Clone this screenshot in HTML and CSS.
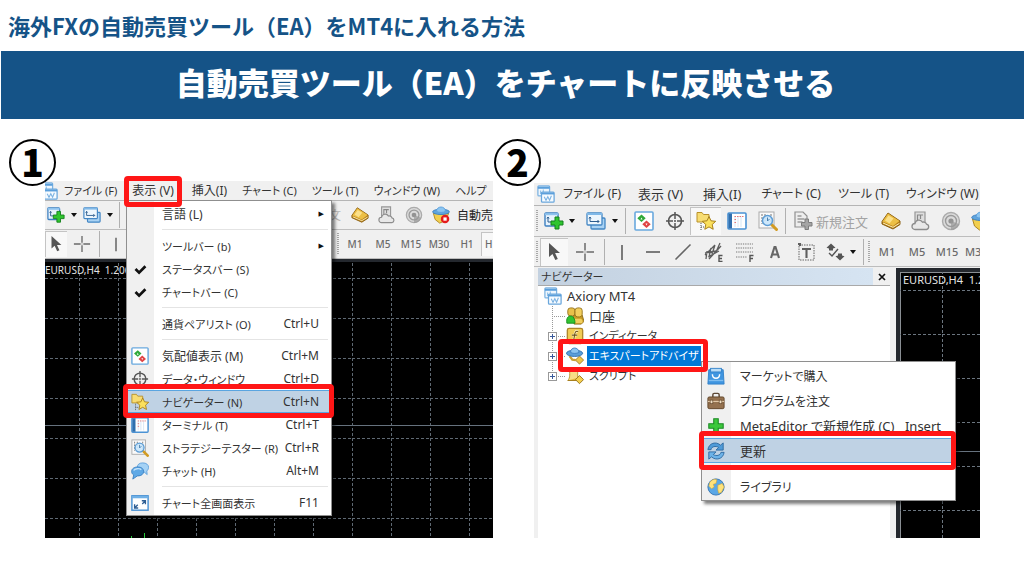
FILE: index.html
```html
<!DOCTYPE html>
<html lang="ja">
<head>
<meta charset="utf-8">
<meta name="viewport" content="width=device-width, initial-scale=1">
<title>自動売買ツール（EA）をチャートに反映させる</title>
<link rel="stylesheet" href="styles.css">
</head>
<body>
<svg class="sprite" aria-hidden="true">
  <defs>
    <symbol id="i-app" viewBox="0 0 20 20">
      <rect x="1" y="1" width="13" height="11" rx="1" fill="#eef6fd" stroke="#7db3e2" stroke-width="1.4"/>
      <path d="M1 3h13" stroke="#5b9fdb" stroke-width="2.4"/>
      <path d="M4 6v4M7 5v3" stroke="#8cc0ea" stroke-width="1.2"/>
      <rect x="5" y="8" width="14" height="11" rx="1" fill="#f6fbff" stroke="#6aa7dc" stroke-width="1.4"/>
      <path d="M5 9.5h14" stroke="#5b9fdb" stroke-width="2"/>
      <path d="M8 13l2 4 2-4 2 4 2-5" fill="none" stroke="#7db3e2" stroke-width="1.2"/>
    </symbol>
    <symbol id="i-newchart" viewBox="0 0 20 20">
      <rect x="1" y="2" width="13" height="13" rx="1" fill="#e6f2fc" stroke="#3c7fc0" stroke-width="1.4"/>
      <path d="M1 3.2h13" stroke="#8ec3ee" stroke-width="2"/>
      <path d="M4 6v5h4M4 6l-1 1.500M4 6l1 1.500" fill="none" stroke="#2c5c8e"/>
      <path d="M11 6h4v4h4v4h-4v4h-4v-4H7v-4h4z" fill="#2fc52f" stroke="#14801c"/>
    </symbol>
    <symbol id="i-profiles" viewBox="0 0 20 20">
      <rect x="5" y="7" width="14" height="11" rx="1" fill="#a9d2f3" stroke="#4386c4" stroke-width="1.300"/>
      <rect x="1" y="2" width="15" height="12" rx="1" fill="#edf6fd" stroke="#4386c4" stroke-width="1.300"/>
      <path d="M1 3h15" stroke="#80b9e8" stroke-width="2"/>
      <path d="M4 6v4.500h9M4 6l-1 1.500M4 6l1 1.500M11.500 9L13 10.500 11.500 12" fill="none" stroke="#2c5c8e"/>
    </symbol>
    <symbol id="i-market" viewBox="0 0 20 20">
      <rect x="1" y="1" width="18" height="18" rx="1" fill="#fff" stroke="#6aa9de" stroke-width="1.600"/>
      <path d="M7.500 3.500l4.200 3.700-4.200 3.700-4.200-3.700z" fill="#2fa93a"/>
      <path d="M12.500 9.500l4.200 3.700-4.200 3.700-4.200-3.700z" fill="#e04444"/>
      <path d="M6.500 8.500l1-2 1 2zM11.500 12.500l1 2 1-2z" fill="#fff"/>
    </symbol>
    <symbol id="i-target" viewBox="0 0 20 20">
      <circle cx="10" cy="10" r="6.500" fill="none" stroke="#555" stroke-width="1.600"/>
      <path d="M10 1v7M10 12v7M1 10h7M12 10h7" stroke="#555" stroke-width="1.500"/>
      <circle cx="10" cy="10" r="1" fill="#555"/>
    </symbol>
    <symbol id="i-nav" viewBox="0 0 20 20">
      <path d="M1 1.500h5l1.500 2H13V11H1z" fill="#f8dd72" stroke="#b8912a"/>
      <path d="M5 12v7M5 16h3" stroke="#555" stroke-dasharray="1 1"/>
      <path d="M13 5.500l2 4.300 4.700.5-3.500 3.200 1 4.800L13 15.900l-4.200 2.400 1-4.800-3.500-3.200 4.700-.5z" fill="#fbe05d" stroke="#a8801c"/>
    </symbol>
    <symbol id="i-terminal" viewBox="0 0 20 20">
      <rect x="1" y="2" width="18" height="16" rx="1" fill="#fff" stroke="#4a92d4" stroke-width="1.600"/>
      <rect x="1.500" y="2.500" width="3.500" height="15" fill="#2f6fae"/>
      <path d="M8 5v11M11 5v11M14 5v11" stroke="#c9dff2" stroke-width=".8"/>
      <path d="M7.500 5.500h9M7.500 8.500h2M7.500 11.500h2" stroke="#e37777" stroke-dasharray="1.500 1"/>
    </symbol>
    <symbol id="i-tester" viewBox="0 0 20 20">
      <rect x="1" y="1" width="15" height="16" fill="#fafafa" stroke="#aaa"/>
      <path d="M4 3v10M7 3v7M13 3v8" stroke="#777" stroke-dasharray="2 1"/>
      <path d="M13.500 13.500l5 5" stroke="#d29b22" stroke-width="3" stroke-linecap="round"/>
      <circle cx="9.500" cy="9.500" r="5" fill="#c9e5fb" fill-opacity=".9" stroke="#5d9dd5" stroke-width="1.500"/>
      <path d="M9.500 6.500v3.500l2-2" fill="none" stroke="#4a7fae"/>
    </symbol>
    <symbol id="i-order" viewBox="0 0 20 20">
      <path d="M2 1h8l4 4v11H2z" fill="#ededed" stroke="#8f8f8f" stroke-width="1.200"/>
      <path d="M4.500 5h4M4.500 8h7M4.500 11h5" stroke="#999" stroke-width="1.300"/>
      <path d="M12 8h3.500v3.500H19V15h-3.500v3.500H12V15H8.500v-3.500H12z" fill="#a5a5a5" stroke="#7d7d7d"/>
    </symbol>
    <symbol id="i-gold" viewBox="0 0 20 20">
      <path d="M1 10.500L7 2l12 8v3.500L12 18 1 13z" fill="#b8801a" stroke="#8c6112" stroke-linejoin="round"/>
      <path d="M1.500 10.500L7 2.500l11.500 7.500-6.500 5z" fill="#ecbf45"/>
      <path d="M4 9.500L7.500 4.500l5 3-4 5z" fill="#fbe08a"/>
      <path d="M2 12l10 4.300 6.500-4" fill="none" stroke="#fff0b5"/>
    </symbol>
    <symbol id="i-server" viewBox="0 0 20 20">
      <path d="M4 1h10v11H4z" fill="#dedede" stroke="#969696" stroke-width="1.200"/>
      <path d="M6.500 11V4h3v4M9 4h3" fill="none" stroke="#888" stroke-width="1.200"/>
      <path d="M4 18.500a3 3 0 0 1 0-6 4 4 0 0 1 7.500-1.300 3 3 0 0 1 4 2 2.700 2.700 0 0 1 0 5.300z" fill="#e8e8e8" stroke="#8c8c8c" stroke-width="1.300"/>
    </symbol>
    <symbol id="i-signal" viewBox="0 0 20 20">
      <circle cx="10" cy="10" r="8.500" fill="#dadada" stroke="#ababab" stroke-width="1.400"/>
      <circle cx="10" cy="10" r="5.500" fill="none" stroke="#9a9a9a" stroke-width="1.400"/>
      <circle cx="10" cy="10" r="2.600" fill="#929292"/>
      <path d="M10 10v9a9 9 0 0 0 8-6z" fill="#999" fill-opacity=".7"/>
    </symbol>
    <symbol id="i-ea" viewBox="0 0 20 20">
      <path d="M1.500 8l2 7 5 4 7-3 3-8z" fill="#f2cf4e" stroke="#ad8420"/>
      <ellipse cx="10" cy="6.500" rx="9.300" ry="3" fill="#5fa5de" stroke="#3c7fc0"/>
      <path d="M5 6c0-6.500 10-6.500 10 0-3 1.500-7 1.500-10 0z" fill="#8cc5f0" stroke="#5b9fdb"/>
      <circle cx="14.500" cy="14.500" r="4.700" fill="#e51b1b"/>
      <rect x="12.700" y="12.700" width="3.600" height="3.600" fill="#fff"/>
    </symbol>
    <symbol id="i-hat" viewBox="0 0 20 20">
      <path d="M15 10l4.500 4.500L15 19l-4.500-4.500z" fill="#edc64a" stroke="#9c7720"/>
      <path d="M4 10l3 4 4 .5" fill="none" stroke="#caa134" stroke-width="2.500"/>
      <ellipse cx="9.500" cy="7" rx="9" ry="3.500" fill="#5a9ed8" stroke="#2f6fae"/>
      <path d="M5 6c0-6.500 9-6.500 9.500 0-3 1.500-6.500 1.500-9.500 0z" fill="#8cc5f0" stroke="#3c7fc0"/>
    </symbol>
    <symbol id="i-chat" viewBox="0 0 20 20">
      <path d="M13 1c4 0 6.500 2 6.500 5 0 2-1 3-2 4l.5 4-3.500-3H13c-4 0-6-2-6-5s2-5 6-5z" fill="#a5d2f5" stroke="#5b9fdb"/>
      <path d="M7.500 5.500c4 0 6.500 2 6.500 5s-2.500 5-6.500 5H7L2 19l1-4.500c-1.500-1-2.300-2.300-2.300-4 0-3 2.800-5 6.800-5z" fill="#5fa9e6" stroke="#3a80c2"/>
      <path d="M3 9.500c1-2 6-3 8.500-1" stroke="#c3e2fa" fill="none" stroke-width="1.500"/>
    </symbol>
    <symbol id="i-full" viewBox="0 0 20 20">
      <rect x="1" y="2" width="18" height="16" fill="#fff" stroke="#4a92d4" stroke-width="1.600"/>
      <path d="M1 3.500h18" stroke="#6fb0e6" stroke-width="2.500"/>
      <path d="M12 7.500h4v4M16 7.500l-3.500 3.500M4 11.500v4h4M4 15.500L7.500 12" fill="none" stroke="#2f5f94" stroke-width="1.500"/>
    </symbol>
    <symbol id="i-people" viewBox="0 0 20 20">
      <path d="M8 9h10l2 7-3 3H9z" fill="#c69a24" stroke="#8d6b14"/>
      <rect x="2" y="1" width="8" height="9" rx="3" fill="#e8c04a" stroke="#94711a"/>
      <rect x="10" y="1" width="8" height="10" rx="3" fill="#f2cf5e" stroke="#94711a"/>
      <path d="M9 13h7c2 0 3 3 2 5H9z" fill="#f2cf5e"/>
      <path d="M1 18c-1-5 1-8 4-8s5 3 5 8z" fill="#32c432" stroke="#168a1c"/>
    </symbol>
    <symbol id="i-fx" viewBox="0 0 20 20">
      <rect x="1.500" y="1.500" width="17" height="17" rx="2" fill="#f1cc55" stroke="#b0872a" stroke-width="1.500"/>
      <path d="M13.500 5c-3-1-3.500 1-4 4l-1 6c-.3 1-1 1.300-2.500 1M6.500 9h6" fill="none" stroke="#fff8d8" stroke-width="2.600"/>
      <path d="M13.500 5c-3-1-3.500 1-4 4l-1 6c-.3 1-1 1.300-2.500 1M6.500 9h6" fill="none" stroke="#6f5210" stroke-width="1.200"/>
    </symbol>
    <symbol id="i-script" viewBox="0 0 20 20">
      <path d="M4 1h9v11l-3 3H2c3-3 2-8 2-14z" fill="#f7de86" stroke="#b8922e"/>
      <path d="M2 15h10c2 0 2-2 1-3" fill="#e5b93d" stroke="#a37a1c"/>
      <path d="M15 9.500l4.500 4.500-4.500 4.500-4.500-4.500z" fill="#f4cf4e" stroke="#94701a"/>
    </symbol>
    <symbol id="i-bag" viewBox="0 0 20 20">
      <path d="M2 3h16l1 16H1z" fill="#3f95e0" stroke="#3080c8"/>
      <rect x="4" y="1.500" width="12" height="4" fill="#b9dcf7" stroke="#3080c8"/>
      <path d="M6 8c0 6 8 6 8 0" fill="none" stroke="#fff" stroke-width="1.600"/>
      <path d="M2 15h16" stroke="#7fbdf0" stroke-width="1.500"/>
    </symbol>
    <symbol id="i-case" viewBox="0 0 20 20">
      <path d="M6.500 6V3q0-1.500 1.500-1.500h4q1.500 0 1.500 1.500v3" fill="none" stroke="#5e4936" stroke-width="1.600"/>
      <rect x="1" y="5.500" width="18" height="13" rx="1.500" fill="#94714f" stroke="#5e4327"/>
      <path d="M1 10.500h18" stroke="#e0c8a8" stroke-width="1.300"/>
      <rect x="3.500" y="9" width="3" height="4" fill="#f0dfc6" stroke="#5e4327" stroke-width=".7"/>
      <rect x="13.500" y="9" width="3" height="4" fill="#f0dfc6" stroke="#5e4327" stroke-width=".7"/>
    </symbol>
    <symbol id="i-plus" viewBox="0 0 20 20">
      <path d="M7.500 2h5v5.500H18v5h-5.500V18h-5v-5.500H2v-5h5.500z" fill="#3cc83c" stroke="#1c8a26" stroke-width="1.200"/>
    </symbol>
    <symbol id="i-refresh" viewBox="0 0 20 20">
      <path d="M1 8.500C2 1 10-1 15 3.500L18 1v8h-8l3-3C9.500 4 5 5 4.500 8.500z" fill="#4f9bd8" stroke="#2b689f"/>
      <path d="M19 11.500c-1 7.500-9 9.500-14 5L2 19v-8h8l-3 3c3.500 2 8 1 8.500-2.500z" fill="#6db3e8" stroke="#2b689f"/>
    </symbol>
    <symbol id="i-globe" viewBox="0 0 20 20">
      <circle cx="10" cy="10" r="9" fill="#5aa7e6" stroke="#3374b3"/>
      <path d="M3 5c3-4 6-4 8-3l-1 4-3 1 1 3-3 2-3-3zM12 8l5-2 2 4-3 6-3 1-1-4z" fill="#ffe27a" stroke="#d4a42c" stroke-width=".6"/>
    </symbol>
    <symbol id="i-cursor" viewBox="0 0 20 20">
      <path d="M5 1v14l3.500-3 2.800 6 2.500-1-2.700-6H16z" fill="#555"/>
    </symbol>
    <symbol id="i-cross" viewBox="0 0 20 20">
      <path d="M10 1v7.500M10 11.500V19M1 10h7.500M11.500 10H19" stroke="#6a6a6a" stroke-width="1.500"/>
      <path d="M9.500 10h1" stroke="#6a6a6a"/>
    </symbol>
    <symbol id="i-vline" viewBox="0 0 20 20"><path d="M10 3v15" stroke="#666" stroke-width="1.700"/></symbol>
    <symbol id="i-hline" viewBox="0 0 20 20"><path d="M3 10h14" stroke="#666" stroke-width="1.700"/></symbol>
    <symbol id="i-trend" viewBox="0 0 20 20"><path d="M2.500 17.500l15-15" stroke="#666" stroke-width="1.600"/></symbol>
    <symbol id="i-channel" viewBox="0 0 20 20">
      <path d="M1 13L11 3M5 17L17 4M3 9l-1 8M7 6L5 15M11 3L8 12M16 1l-4 9M1 11l11-2M4 15l11-6" stroke="#5c5c5c" stroke-width="1.300"/>
      <path d="M18.500 13.500H15v6h3.500M15 16.500h3" fill="none" stroke="#555" stroke-width="1.400"/>
    </symbol>
    <symbol id="i-fibo" viewBox="0 0 20 20">
      <path d="M1 2h17M1 6h17M1 10h17M1 15h11" stroke="#777" stroke-width="1.200" stroke-dasharray="1.300 1"/>
      <path d="M18.500 13.500H15V20M15 16.500h3" fill="none" stroke="#555" stroke-width="1.400"/>
    </symbol>
    <symbol id="i-text" viewBox="0 0 20 20">
      <path d="M6 16L9.500 5h1L14 16M7.500 12.500h5" fill="none" stroke="#666" stroke-width="2.100"/>
    </symbol>
    <symbol id="i-label" viewBox="0 0 20 20">
      <rect x="3" y="3" width="15" height="15" fill="none" stroke="#666" stroke-dasharray="1.500 1"/>
      <path d="M6 7h9M10.500 7v9M2 2h2v2" fill="none" stroke="#5f5f5f" stroke-width="2.100"/>
    </symbol>
    <symbol id="i-shapes" viewBox="0 0 20 20">
      <path d="M6 1.500l4.500 4.200L8 6.500v2H4v-2l-2.500-.8z" fill="#555"/>
      <path d="M15 18.500l-4.500-4.200 2.500-.8v-2h4v2l2.500.8z" fill="#555"/>
      <path d="M4 11l3 3 6-7" fill="none" stroke="#555" stroke-width="1.400"/>
    </symbol>
    <symbol id="i-check" viewBox="0 0 20 20"><path d="M5 10l4 4 7-7" fill="none" stroke="#111" stroke-width="3"/></symbol>
    <pattern id="grid-wide" x="34" y="16" width="39" height="40" patternUnits="userSpaceOnUse">
      <path d="M.5 0v40M0 .5h39" fill="none" stroke="#5f6973" stroke-dasharray="3 2"/>
    </pattern>
    <pattern id="grid-large" x="42" y="18" width="44" height="44" patternUnits="userSpaceOnUse">
      <path d="M.5 0v44M0 .5h44" fill="none" stroke="#6b757f" stroke-dasharray="3 2"/>
    </pattern>
  </defs>
</svg>

<header>
  <p class="topic">海外FXの自動売買ツール（EA）をMT4に入れる方法</p>
  <h1 class="banner">自動売買ツール（EA）をチャートに反映させる</h1>
</header>

<main class="steps">
  <section class="step" aria-label="手順1">
    <div class="badge">1</div>
    <div class="window window-small">
      <nav class="menubar">
        <svg class="icon app-icon"><use href="#i-app"/></svg>
        <button class="kana">ファイル (F)</button>
        <button class="marked">表示 (V)</button>
        <button>挿入(I)</button>
        <button class="kana">チャート (C)</button>
        <button class="kana">ツール (T)</button>
        <button class="kana">ウィンドウ (W)</button>
        <button class="kana">ヘルプ</button>
      </nav>
      <div class="toolbar">
        <button class="tool" aria-label="新規チャート"><svg class="icon"><use href="#i-newchart"/></svg></button>
        <span class="caret"></span>
        <button class="tool" aria-label="プロファイル"><svg class="icon"><use href="#i-profiles"/></svg></button>
        <span class="caret"></span>
        <span class="divider"></span>
        <div class="tool-end">
          <span class="faded">文</span>
          <button class="tool" aria-label="MetaEditor"><svg class="icon"><use href="#i-gold"/></svg></button>
          <button class="tool" aria-label="サーバー"><svg class="icon"><use href="#i-server"/></svg></button>
          <button class="tool" aria-label="シグナル"><svg class="icon"><use href="#i-signal"/></svg></button>
          <button class="tool" aria-label="自動売買"><svg class="icon"><use href="#i-ea"/></svg></button>
          <span class="auto">自動売</span>
        </div>
      </div>
      <div class="toolbar">
        <button class="tool pressed" aria-label="カーソル"><svg class="icon"><use href="#i-cursor"/></svg></button>
        <button class="tool wide" aria-label="クロスヘア"><svg class="icon"><use href="#i-cross"/></svg></button>
        <span class="divider"></span>
        <button class="tool vline" aria-label="垂直線"><svg class="icon"><use href="#i-vline"/></svg></button>
        <div class="tool-end">
          <span class="grip"></span>
          <button class="frame">M1</button><button class="frame">M5</button><button class="frame">M15</button><button class="frame">M30</button><button class="frame">H1</button><button class="frame pressed cut">H</button>
        </div>
      </div>
      <div class="chart">
        <svg class="plot" aria-hidden="true">
          <rect width="100%" height="100%" fill="url(#grid-wide)"/>
          <path d="M0 163.500h4000" stroke="#66727e"/>
          <path d="M86.500 274v4M99.500 271v7" stroke="#27c93a"/>
        </svg>
        <span class="quote">EURUSD,H4&nbsp; 1.206</span>
      </div>

      <div class="menu menu-view">
        <button class="item"><span></span><span>言語 (L)</span><span class="more">▶</span></button>
        <hr>
        <button class="item"><span></span><span class="kana">ツールバー (b)</span><span class="more">▶</span></button>
        <button class="item"><svg class="icon"><use href="#i-check"/></svg><span class="kana">ステータスバー (S)</span></button>
        <button class="item"><svg class="icon"><use href="#i-check"/></svg><span class="kana">チャートバー (C)</span></button>
        <hr>
        <button class="item"><span></span><span class="kana">通貨ペアリスト (O)</span><kbd>Ctrl+U</kbd></button>
        <hr>
        <button class="item"><svg class="icon"><use href="#i-market"/></svg><span>気配値表示 (M)</span><kbd>Ctrl+M</kbd></button>
        <button class="item"><svg class="icon"><use href="#i-target"/></svg><span class="kana">データ・ウィンドウ</span><kbd>Ctrl+D</kbd></button>
        <button class="item active marked"><svg class="icon"><use href="#i-nav"/></svg><span class="kana">ナビゲーター (N)</span><kbd>Ctrl+N</kbd></button>
        <button class="item"><svg class="icon"><use href="#i-terminal"/></svg><span class="kana">ターミナル (T)</span><kbd>Ctrl+T</kbd></button>
        <button class="item"><svg class="icon"><use href="#i-tester"/></svg><span class="kana">ストラテジーテスター (R)</span><kbd>Ctrl+R</kbd></button>
        <button class="item"><svg class="icon"><use href="#i-chat"/></svg><span class="kana">チャット (H)</span><kbd>Alt+M</kbd></button>
        <hr>
        <button class="item"><svg class="icon"><use href="#i-full"/></svg><span class="kana">チャート全画面表示</span><kbd>F11</kbd></button>
      </div>
    </div>
  </section>

  <section class="step" aria-label="手順2">
    <div class="badge">2</div>
    <div class="window window-large">
      <nav class="menubar">
        <svg class="icon app-icon"><use href="#i-app"/></svg>
        <button class="kana">ファイル (F)</button>
        <button class="short">表示 (V)</button>
        <button class="short">挿入(I)</button>
        <button class="kana">チャート (C)</button>
        <button class="kana">ツール (T)</button>
        <button class="kana">ウィンドウ (W)</button>
      </nav>
      <div class="toolbar">
        <span class="grip"></span>
        <button class="tool first" aria-label="新規チャート"><svg class="icon"><use href="#i-newchart"/></svg></button>
        <span class="caret"></span>
        <button class="tool" aria-label="プロファイル"><svg class="icon"><use href="#i-profiles"/></svg></button>
        <span class="caret"></span>
        <span class="divider"></span>
        <button class="tool" aria-label="気配値表示"><svg class="icon"><use href="#i-market"/></svg></button>
        <button class="tool" aria-label="データ・ウィンドウ"><svg class="icon"><use href="#i-target"/></svg></button>
        <button class="tool pressed" aria-label="ナビゲーター"><svg class="icon"><use href="#i-nav"/></svg></button>
        <button class="tool" aria-label="ターミナル"><svg class="icon"><use href="#i-terminal"/></svg></button>
        <button class="tool" aria-label="ストラテジーテスター"><svg class="icon"><use href="#i-tester"/></svg></button>
        <span class="divider"></span>
        <button class="order"><svg class="icon"><use href="#i-order"/></svg>新規注文</button>
        <button class="tool" aria-label="MetaEditor"><svg class="icon"><use href="#i-gold"/></svg></button>
        <button class="tool" aria-label="サーバー"><svg class="icon"><use href="#i-server"/></svg></button>
        <button class="tool" aria-label="シグナル"><svg class="icon"><use href="#i-signal"/></svg></button>
        <button class="tool" aria-label="自動売買"><svg class="icon"><use href="#i-ea"/></svg></button>
      </div>
      <div class="toolbar">
        <span class="grip"></span>
        <button class="tool first pressed" aria-label="カーソル"><svg class="icon"><use href="#i-cursor"/></svg></button>
        <button class="tool cross" aria-label="クロスヘア"><svg class="icon"><use href="#i-cross"/></svg></button>
        <span class="divider"></span>
        <div class="drawing">
          <button class="tool" aria-label="垂直線"><svg class="icon"><use href="#i-vline"/></svg></button>
          <button class="tool" aria-label="水平線"><svg class="icon"><use href="#i-hline"/></svg></button>
          <button class="tool" aria-label="トレンドライン"><svg class="icon"><use href="#i-trend"/></svg></button>
          <button class="tool" aria-label="チャネル"><svg class="icon"><use href="#i-channel"/></svg></button>
          <button class="tool" aria-label="フィボナッチ"><svg class="icon"><use href="#i-fibo"/></svg></button>
          <button class="tool" aria-label="テキスト"><svg class="icon"><use href="#i-text"/></svg></button>
          <button class="tool" aria-label="ラベル"><svg class="icon"><use href="#i-label"/></svg></button>
        </div>
        <button class="tool first" aria-label="図形"><svg class="icon"><use href="#i-shapes"/></svg></button>
        <span class="caret"></span>
        <span class="divider"></span>
        <span class="grip"></span>
        <button class="frame">M1</button><button class="frame">M5</button><button class="frame">M15</button><button class="frame cut">M3</button>
      </div>
      <div class="workspace">
        <aside class="navigator">
          <div class="pane-head"><span class="pane-title">ナビゲーター</span><button class="close" aria-label="閉じる"><svg viewBox="0 0 8 8"><path d="M1 1l6 6M7 1L1 7" stroke="#111" stroke-width="1.700"/></svg></button></div>
          <ul class="tree">
            <li class="root"><svg class="icon"><use href="#i-app"/></svg><span>Axiory MT4</span></li>
            <li class="node"><span class="twig"></span><svg class="icon"><use href="#i-people"/></svg><span class="name">口座</span></li>
            <li class="node"><span class="twig"><i class="plus"></i></span><svg class="icon"><use href="#i-fx"/></svg><span class="name kana">インディケータ</span></li>
            <li class="node marked"><span class="twig"><i class="plus"></i></span><svg class="icon"><use href="#i-hat"/></svg><span class="name kana selected">エキスパートアドバイザ</span></li>
            <li class="node last"><span class="twig"><i class="plus"></i></span><svg class="icon"><use href="#i-script"/></svg><span class="name kana">スクリプト</span></li>
          </ul>
        </aside>
        <div class="chart">
          <svg class="plot" aria-hidden="true">
            <rect width="100%" height="100%" fill="url(#grid-large)"/>
            <path d="M0 179.500h4000" stroke="#66727e"/>
          </svg>
          <span class="quote">EURUSD,H4&nbsp; 1.2</span>
        </div>
      </div>

      <div class="menu menu-context">
        <button class="item"><svg class="icon"><use href="#i-bag"/></svg><span class="kana">マーケットで購入</span></button>
        <button class="item"><svg class="icon"><use href="#i-case"/></svg><span class="kana">プログラムを注文</span></button>
        <button class="item"><svg class="icon"><use href="#i-plus"/></svg><span>MetaEditor で新規作成 (C)</span><kbd>Insert</kbd></button>
        <button class="item active marked"><svg class="icon"><use href="#i-refresh"/></svg><span>更新</span></button>
        <hr>
        <button class="item"><svg class="icon"><use href="#i-globe"/></svg><span class="kana">ライブラリ</span></button>
      </div>
    </div>
  </section>
</main>
</body>
</html>
```
FILE: styles.css
```css
*, *::before, *::after { box-sizing: border-box; }

body {
  margin: 0;
  min-height: 100vh;
  display: flex;
  flex-direction: column;
  background: #fff;
  color: #333;
  font-family: "Noto Sans", "Noto Sans CJK JP", sans-serif;
}

button {
  margin: 0;
  padding: 0;
  border: 0;
  background: none;
  color: inherit;
  font: inherit;
  white-space: nowrap;
}

.sprite { position: absolute; width: 0; height: 0; }

.topic {
  margin: 0;
  padding: 9px 8px 10px;
  color: #155387;
  font: 700 22px/32px "Noto Sans CJK JP", sans-serif;
}

.banner {
  margin: 0 0 0 1px;
  padding: 11px 0 17px;
  background: #155387;
  color: #fff;
  text-align: center;
  text-indent: -14px;
  font: 900 31px/40px "Noto Sans CJK JP", sans-serif;
}

.steps {
  flex: 1;
  display: grid;
  grid-template-columns: 224fr 223fr;
  column-gap: 41px;
  padding: 20px 44px 38px 45px;
}

.step { min-width: 0; display: flex; flex-direction: column; }

.badge {
  position: relative;
  z-index: 1;
  width: 47px;
  height: 47px;
  margin: 0 0 -5px -36px;
  border: 2px solid #000;
  border-radius: 50%;
  background: #fff;
  color: #000;
  text-align: center;
  font: 900 37px/40px "Noto Sans CJK JP", sans-serif;
}

.step + .step .badge { margin: 0 0 -3px -40px; }

/* Application window */
.window {
  position: relative;
  flex: 1;
  display: flex;
  flex-direction: column;
  background: #f0f0f0;
  font-feature-settings: "palt";
}

.window-small { font-size: 12px; }
.window-small .kana { font-size: 11px; }
.window-large { font-size: 13px; }
.window-large .kana { font-size: 12px; }

.icon { flex: none; display: block; width: 18px; height: 18px; }
.window-large .toolbar .icon { width: 20px; height: 20px; }

.menubar {
  display: flex;
  align-items: center;
  gap: 15px;
  height: 20px;
  border-bottom: 1px solid #b5b5b5;
  overflow-x: clip;
}

.menubar button { flex: none; height: 20px; line-height: 20px; }
.menubar .marked { margin-right: 3px; }
.menubar .short { margin-right: 3px; }
.window-small .app-icon { margin: 0 -9px 0 -5px; }
.window-large .menubar { height: 23px; gap: 17px; padding-left: 3px; }
.window-large .app-icon { margin-right: -9px; }

.marked { position: relative; z-index: 3; }

.marked::after {
  content: "";
  position: absolute;
  border: 5px solid #ff1616;
  border-radius: 4px;
  pointer-events: none;
}

.menubar .marked::after { inset: -5px -8px -6px; }

.toolbar {
  display: flex;
  align-items: center;
  height: 29px;
  border-bottom: 1px solid #bdbdbd;
  overflow: hidden;
}

.window-large .toolbar { height: 31px; }
.window-large .toolbar + .toolbar { height: 30px; }

.tool {
  flex: none;
  display: flex;
  align-items: center;
  justify-content: center;
  width: 27px;
  height: 26px;
}

.window-small > .toolbar > .tool { width: 22px; }
.window-small > .toolbar > .wide { width: 30px; }
.window-small > .toolbar > .vline { width: 28px; }
.window-large .tool { width: 31px; height: 28px; }
.window-large .order ~ .tool { width: 30px; }
.window-large .first { width: 28px; }
.window-large .cross { width: 34px; }

.pressed { background: #f8f8f8; box-shadow: inset 1px 1px 0 #c4c4c4; }

.caret { flex: none; width: 14px; }
.caret::before {
  content: "";
  display: block;
  width: 6px;
  margin: 0 auto;
  border: 3px solid transparent;
  border-top: 4px solid #111;
  border-bottom: 0;
}
.window-large .caret { width: 8px; margin-right: 4px; }

.divider { flex: none; width: 1px; height: 26px; margin: 0 2px; background: #b0b0b0; }

.grip {
  flex: none;
  width: 2px;
  height: 22px;
  margin: 0 2px;
  background: repeating-linear-gradient(#a8a8a8 0 1px, transparent 1px 2px);
}

.tool-end { display: flex; align-items: center; margin-left: auto; }
.faded { padding-right: 6px; color: #b5b5b5; }
.auto { padding-left: 2px; color: #222; font-feature-settings: normal; }

.frame {
  flex: none;
  width: 28px;
  height: 24px;
  color: #6b6b6b;
  font-size: 10px;
  font-weight: 500;
}
.window-large .frame { width: 30px; font-size: 11px; }
.window-small .cut { width: 12px; padding-left: 4px; text-align: left; }
.window-large .cut { width: 19px; padding-left: 3px; text-align: left; }

.order {
  flex: none;
  display: flex;
  align-items: center;
  gap: 3px;
  width: 88px;
  padding-left: 5px;
  color: #a3a3a3;
}

.drawing { flex: none; display: flex; width: 214px; }
.drawing .tool { flex: 1; }

.chart {
  position: relative;
  flex: 1;
  min-width: 0;
  border: solid #24282e;
  border-width: 3px 0 0;
  background: #000;
  overflow: hidden;
}

.plot { position: absolute; inset: 0; width: 100%; height: 100%; }

.quote {
  position: relative;
  display: block;
  color: #e4e4e4;
  font: 10px/16px "Noto Sans", sans-serif;
  white-space: nowrap;
}

.workspace { flex: 1; display: flex; padding-top: 1px; }
.workspace .chart { border-width: 4px 0 0 4px; box-shadow: inset 1px 1px 0 #8a8f94; }
.workspace .quote { margin-left: 3px; font-size: 11px; }

/* Navigator pane */
.navigator {
  flex: 0 0 362px;
  display: flex;
  flex-direction: column;
  padding: 0 6px 0 4px;
}

.pane-head { display: flex; height: 18px; border-bottom: 1px solid #a9a9a9; }

.pane-title {
  flex: 1;
  padding-left: 3px;
  background: linear-gradient(90deg, #c3d1e0, #d6e4f2);
  font-size: 11px;
  line-height: 18px;
}

.close { width: 17px; display: grid; place-items: center; }
.close svg { width: 8px; height: 8px; }

.tree {
  flex: 1;
  margin: 0;
  padding: 0 0 0 6px;
  list-style: none;
  background: #fff;
}

.root, .node { display: flex; align-items: center; height: 20px; white-space: nowrap; }
.root { gap: 5px; }
.node { width: fit-content; }
.node .icon { margin: 0 3px 0 1px; }
.name { padding: 0 2px; line-height: 20px; }
.window-large .name.kana { font-size: 11px; }
.selected { background: #0078d7; color: #fff; }

.twig {
  position: relative;
  align-self: stretch;
  width: 21px;
  background:
    repeating-linear-gradient(#999 0 1px, transparent 1px 2px) 8px 0 / 1px 100% no-repeat,
    repeating-linear-gradient(90deg, #999 0 1px, transparent 1px 2px) 8px 10px / 13px 1px no-repeat;
}

.last .twig { background-size: 1px 10px, 13px 1px; }

.plus {
  position: absolute;
  left: 4px;
  top: 6px;
  width: 9px;
  height: 9px;
  border: 1px solid #999;
  background:
    linear-gradient(#3a5a9a, #3a5a9a) center / 5px 1px no-repeat,
    linear-gradient(#3a5a9a, #3a5a9a) center / 1px 5px no-repeat,
    #fff;
}

.node.marked::after { inset: -7px -7px -6px 14px; }

/* Drop-down and context menus */
.menu {
  position: absolute;
  z-index: 2;
  border: 1px solid #8f8f8f;
  background: linear-gradient(90deg, #f0f0f0 27px, #fff 27px);
  box-shadow: 3px 3px 3px rgba(0, 0, 0, .5);
}

.menu-view { left: 81px; top: 19px; width: 206px; padding: 1px 0; }
.menu-context { left: 167px; top: 178px; width: 255px; padding: 1px 0; background: linear-gradient(90deg, #f0f0f0 29px, #fff 29px); }

.item {
  display: grid;
  grid-template-columns: 35px 1fr auto;
  align-items: center;
  width: 100%;
  height: 23px;
  padding-right: 12px;
  text-align: left;
}

.item .icon { margin-left: 4px; }
.menu-context .item { grid-template-columns: 38px 1fr auto; height: 25px; padding-right: 14px; }
.menu-context .icon { margin-left: 5px; }
.item kbd { font: inherit; }
.more { margin-right: -5px; color: #111; font: 7px/10px "DejaVu Sans", sans-serif; }

.menu hr { height: 1px; margin: 4px 3px 4px 35px; border: 0; background: #e4e4e4; }
.menu-context hr { margin: 5px 3px 5px 38px; }

.active { background: #bfd2e4; box-shadow: inset 0 1px #5aa5e0, inset 0 -1px #5aa5e0; }
.item.marked::after { inset: -6px -3px -5px -4px; }
.menu-context .item.marked::after { inset: -7px -1px -7px -3px; }
```
